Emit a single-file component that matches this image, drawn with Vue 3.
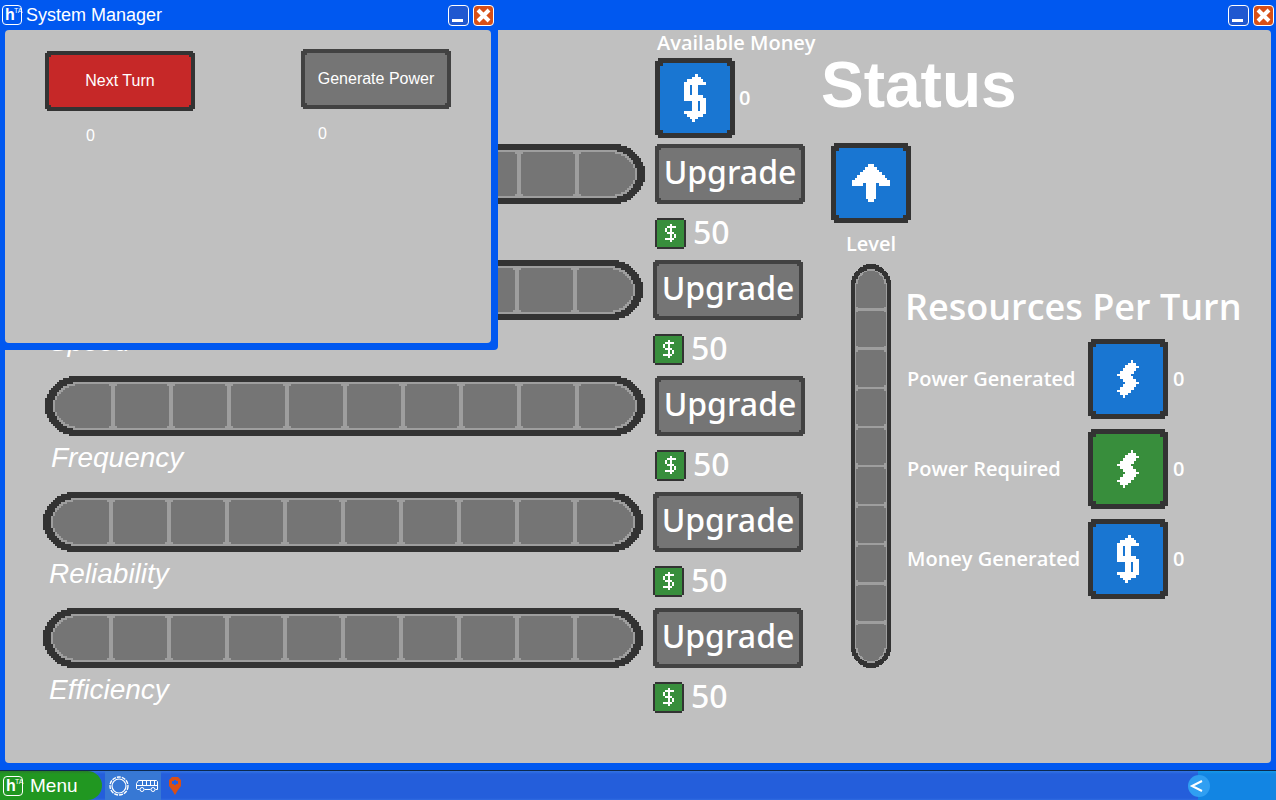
<script setup>
const attributes = [
  { label: '', price: 50, inset: true },
  { label: 'Speed', price: 50, inset: false },
  { label: 'Frequency', price: 50, inset: true },
  { label: 'Reliability', price: 50, inset: false },
  { label: 'Efficiency', price: 50, inset: false }
]

const resources = [
  { label: 'Power Generated', icon: 'bolt', tone: 'blue', value: 0 },
  { label: 'Power Required', icon: 'bolt', tone: 'green', value: 0 },
  { label: 'Money Generated', icon: 'dollar', tone: 'blue', value: 0 }
]

// Sprites are lists of [x, y, width, height] blocks.
const sprites = {
  dollar: [
    [40, 16, 3, 3], [37, 19, 9, 2], [32, 21, 16, 3], [29, 24, 22, 3],
    [29, 27, 6, 10], [37, 27, 6, 10], [29, 37, 19, 3], [29, 40, 22, 3],
    [37, 43, 6, 10], [45, 43, 6, 10], [29, 53, 22, 3], [32, 56, 16, 3],
    [35, 59, 8, 2], [37, 61, 3, 3]
  ],
  bolt: [
    [43, 21, 2, 3], [40, 24, 8, 2], [37, 26, 11, 1], [37, 27, 14, 2], [35, 29, 13, 3],
    [32, 32, 14, 3], [29, 35, 14, 2], [32, 37, 13, 3], [35, 40, 13, 3],
    [37, 43, 14, 2], [35, 45, 13, 3], [32, 48, 14, 3], [29, 51, 14, 2],
    [32, 53, 11, 1], [32, 54, 8, 2], [35, 56, 2, 3]
  ],
  arrow: [
    [37, 21, 6, 3], [34, 24, 12, 3], [32, 27, 16, 2], [29, 29, 22, 3],
    [26, 32, 28, 3], [24, 35, 32, 2], [21, 37, 38, 3], [21, 40, 11, 3],
    [35, 40, 10, 16], [48, 40, 11, 3], [37, 56, 6, 3]
  ],
  cash: [
    [15, 6, 2, 18], [12, 8, 9, 2], [10, 10, 2, 4], [12, 14, 7, 2],
    [19, 16, 2, 4], [10, 20, 9, 2]
  ]
}

const blocks = (name) => sprites[name].map(([x, y, w, h]) => `M${x} ${y}h${w}v${h}h-${w}z`).join('')

// A capsule built of rows two units high, its ends stepped along half an ellipse.
function capsule(x, y, width, height, rx) {
  const r = height / 2
  let d = ''
  for (let row = 0; row < height; row += 2) {
    const dy = (r - row - 1) / r
    const cut = Math.round((rx * (1 - Math.sqrt(1 - dy * dy))) / 2) * 2
    d += `M${x + cut} ${y + row}h${width - cut * 2}v2h-${width - cut * 2}z`
  }
  return d
}

const shell = capsule(0, 0, 600, 60, 32)
const rim = capsule(8, 6, 584, 48, 28)
const core = capsule(10, 8, 580, 44, 28)
const dividers = Array.from({ length: 9 }, (_, i) => {
  const x = 66 + i * 58
  return `M${x} 8h4v44h-4zM${x - 2} 8h8v2h-8zM${x - 2} 50h8v2h-8z`
}).join('')
</script>

<template>
  <div class="desktop">
    <main class="window">
      <header class="titlebar">
        <span class="spacer"></span>
        <button class="control" aria-label="Minimize">
          <svg viewBox="0 0 21 21"><path d="M4 14h11v3H4z" fill="#fff" /></svg>
        </button>
        <button class="control close" aria-label="Close">
          <svg viewBox="0 0 21 21"><path d="M5 5l11 11M16 5L5 16" stroke="#fff" stroke-width="4" /></svg>
        </button>
      </header>

      <div class="pane board">
        <section class="attributes">
          <div class="money">
            <h2 class="caption">Available Money</h2>
            <div class="amount">
              <span class="frame tile blue">
                <svg viewBox="0 0 80 80" shape-rendering="crispEdges"><path :d="blocks('dollar')" fill="#fff" /></svg>
              </span>
              <span class="caption">0</span>
            </div>
          </div>

          <div v-for="(item, i) in attributes" :key="i" class="attribute" :class="{ inset: item.inset }">
            <svg class="meter" viewBox="0 0 600 60" shape-rendering="crispEdges" aria-hidden="true">
              <path :d="shell" fill="#333" />
              <path :d="rim" fill="#9e9e9e" />
              <path :d="core" fill="#757575" />
              <path :d="dividers" fill="#9e9e9e" />
            </svg>
            <button class="frame upgrade">Upgrade</button>
            <h3 class="name">{{ item.label }}</h3>
            <div class="price">
              <span class="frame cash">
                <svg viewBox="0 0 31 31" shape-rendering="crispEdges"><path :d="blocks('cash')" fill="#fff" /></svg>
              </span>
              <span>{{ item.price }}</span>
            </div>
          </div>
        </section>

        <section class="status">
          <h1>Status</h1>
          <div class="columns">
            <div class="level">
              <span class="frame tile blue">
                <svg viewBox="0 0 80 80" shape-rendering="crispEdges"><path :d="blocks('arrow')" fill="#fff" /></svg>
              </span>
              <h2 class="caption">Level</h2>
              <svg class="gauge" viewBox="0 0 60 600" preserveAspectRatio="none" shape-rendering="crispEdges" aria-hidden="true">
                <g transform="matrix(0 1 1 0 0 0)">
                  <path :d="shell" fill="#333" />
                  <path :d="rim" fill="#9e9e9e" />
                  <path :d="core" fill="#757575" />
                  <path :d="dividers" fill="#9e9e9e" />
                </g>
              </svg>
            </div>
            <div class="resources">
              <h2>Resources Per Turn</h2>
              <div v-for="r in resources" :key="r.label" class="resource">
                <span class="caption">{{ r.label }}</span>
                <span class="frame tile" :class="r.tone">
                  <svg viewBox="0 0 80 80" shape-rendering="crispEdges"><path :d="blocks(r.icon)" fill="#fff" /></svg>
                </span>
                <span class="caption">{{ r.value }}</span>
              </div>
            </div>
          </div>
        </section>
      </div>
    </main>

    <section class="window manager" aria-label="System Manager">
      <header class="titlebar">
        <span class="logo"><b>h</b><small>TA</small></span>
        <span class="title">System Manager</span>
        <span class="spacer"></span>
        <button class="control" aria-label="Minimize">
          <svg viewBox="0 0 21 21"><path d="M4 14h11v3H4z" fill="#fff" /></svg>
        </button>
        <button class="control close" aria-label="Close">
          <svg viewBox="0 0 21 21"><path d="M5 5l11 11M16 5L5 16" stroke="#fff" stroke-width="4" /></svg>
        </button>
      </header>
      <div class="pane actions">
        <div class="action">
          <button class="frame red">Next Turn</button>
          <output>0</output>
        </div>
        <div class="action power">
          <button class="frame">Generate Power</button>
          <output>0</output>
        </div>
      </div>
    </section>

    <footer class="taskbar">
      <button class="start"><span class="logo"><b>h</b><small>TA</small></span>Menu</button>
      <button class="task open" aria-label="Ring">
        <svg width="20" height="20" viewBox="0 0 20 20" fill="none" stroke="#fff">
          <circle cx="10" cy="10" r="7" stroke-width="1.2" />
          <circle cx="10" cy="10" r="9" stroke-width="1.4" stroke-dasharray="4 1" />
        </svg>
      </button>
      <button class="task open" aria-label="Bus">
        <svg width="22" height="14" viewBox="0 0 22 14" fill="none" stroke="#fff">
          <path d="M3.500 10.500h-2l-1-1v-5l2-3h18l1 1v8h-2M8.500 10.500h6M.5 6.500h21M6.500 2v4M10.500 2v4M14.500 2v4M18.500 2v4" />
          <circle cx="6" cy="10.500" r="2" /><circle cx="17" cy="10.500" r="2" />
        </svg>
      </button>
      <button class="task" aria-label="Pin">
        <svg width="12" height="18" viewBox="0 0 12 18">
          <path fill="#d84f16" fill-rule="evenodd" d="M3 0h6l3 3v6l-3 4-3 5-3-5-3-4V3zM5 3v1H3v3h2v1h2V7h2V4H7V3z" />
        </svg>
      </button>
      <span class="spacer"></span>
      <div class="tray">
        <button aria-label="Show hidden icons">
          <svg width="22" height="22" viewBox="0 0 22 22" fill="none" stroke="#fff" stroke-width="2"><path d="M14 6L4 11l10 5" /></svg>
        </button>
      </div>
    </footer>
  </div>
</template>

<style>
body {
  margin: 0;
}
</style>

<style scoped>
.desktop {
  position: relative;
  display: flex;
  flex-direction: column;
  min-height: 100vh;
  box-sizing: border-box;
  overflow: hidden;
  color: #fff;
  font-family: "Liberation Sans", Arial, sans-serif;
  font-size: 16px;
}
.desktop * {
  box-sizing: border-box;
}
h1, h2, h3 {
  margin: 0;
  font-weight: 400;
}
button {
  padding: 0;
  border: 0;
  background: none;
  color: inherit;
  font: inherit;
}
svg {
  display: block;
}
.spacer {
  flex: 1;
}
.window {
  display: flex;
  flex: 1;
  flex-direction: column;
  padding: 0 5px 7px;
  background: #0058f0;
}
.titlebar {
  display: flex;
  align-items: center;
  gap: 4px;
  height: 30px;
  margin: 0 -3px;
}
.title {
  font-size: 18px;
}
.control {
  width: 21px;
  height: 21px;
  border: 1px solid #fff;
  border-radius: 4px;
  background: #2058d0;
}
.control svg {
  width: 21px;
  height: 21px;
  margin: -1px;
}
.close {
  background: #d84f16;
}
.logo {
  display: flex;
  width: 20px;
  height: 20px;
  padding-left: 2px;
  border: 1px solid #fff;
  border-radius: 4px;
  line-height: 18px;
}
.logo b {
  width: 8px;
  font-size: 16px;
}
.logo small {
  padding-left: 1px;
  font-size: 7px;
  font-weight: 400;
  line-height: 10px;
}
.pane {
  flex: 1;
  border-radius: 4px;
  background: #c0c0c0;
}
.manager {
  position: absolute;
  top: 0;
  left: 0;
  width: 498px;
  min-height: 350px;
  padding-right: 7px;
  border-radius: 0 0 4px 0;
}
.actions {
  display: flex;
  justify-content: space-between;
  padding: 21px 40px;
}
.action {
  display: flex;
  flex-direction: column;
  gap: 16px;
}
.action output {
  padding-left: 41px;
  line-height: 18px;
}
.power {
  margin-top: -2px;
}
.power output {
  padding-left: 17px;
}

.frame {
  --edge: #424242;
  --fill: #757575;
  --cut: 2px;
  display: block;
  width: 150px;
  height: 60px;
  border: 4px solid var(--edge);
  background:
    linear-gradient(var(--edge), var(--edge)) 0 0 / var(--cut) var(--cut) no-repeat,
    linear-gradient(var(--edge), var(--edge)) 100% 0 / var(--cut) var(--cut) no-repeat,
    linear-gradient(var(--edge), var(--edge)) 0 100% / var(--cut) var(--cut) no-repeat,
    linear-gradient(var(--edge), var(--edge)) 100% 100% / var(--cut) var(--cut) no-repeat,
    var(--fill);
  clip-path: polygon(
    var(--cut) 0, calc(100% - var(--cut)) 0, calc(100% - var(--cut)) var(--cut), 100% var(--cut),
    100% calc(100% - var(--cut)), calc(100% - var(--cut)) calc(100% - var(--cut)),
    calc(100% - var(--cut)) 100%, var(--cut) 100%, var(--cut) calc(100% - var(--cut)),
    0 calc(100% - var(--cut)), 0 var(--cut), var(--cut) var(--cut)
  );
}
.red {
  --edge: #333;
  --fill: #c62828;
}
.tile {
  --edge: #333;
  --cut: 3px;
  flex: none;
  width: 80px;
  height: 80px;
  border-width: 5px;
}
.tile svg {
  width: 80px;
  height: 80px;
  margin: -5px;
}
.blue {
  --fill: #1976d2;
}
.green {
  --fill: #388e3c;
}
.cash {
  --edge: #333;
  --fill: #388e3c;
  width: 31px;
  height: 31px;
  border-width: 2px;
  background: var(--fill);
}
.cash svg {
  width: 31px;
  height: 31px;
  margin: -2px;
}
.upgrade,
.price {
  font-family: "Noto Sans", sans-serif;
  font-size: 32px;
  font-weight: 500;
}
.upgrade {
  line-height: 44px;
  padding-bottom: 4px;
}
.caption {
  font-family: "Open Sans", "Noto Sans", sans-serif;
  font-size: 20px;
  font-weight: 600;
  line-height: 26px;
  white-space: nowrap;
}

.board {
  display: flex;
  gap: 26px;
}
.attributes {
  flex: none;
  padding-left: 38px;
}
.money {
  width: 148px;
  height: 114px;
  margin-left: 612px;
}
.money h2 {
  padding-left: 2px;
}
.amount {
  display: flex;
  align-items: center;
  gap: 4px;
  margin-top: 2px;
}
.attribute {
  display: grid;
  grid-template-columns: 600px 150px;
  grid-template-rows: 60px 56px;
  column-gap: 10px;
}
.inset {
  margin-left: 2px;
  margin-right: -2px;
}
.meter {
  width: 600px;
  height: 60px;
}
.name {
  padding: 6px;
  font-size: 28px;
  font-style: italic;
  line-height: 32px;
}
.price {
  display: flex;
  gap: 7px;
  padding-top: 14px;
  line-height: 28px;
}

.status {
  flex: 1;
  padding-top: 18px;
}
h1 {
  margin-left: -8px;
  font-size: 64px;
  font-weight: 700;
  line-height: 74px;
}
.columns {
  display: flex;
  margin: 21px 0 0 2px;
}
.level {
  display: flex;
  flex: none;
  flex-direction: column;
  align-items: center;
  width: 80px;
}
.level .caption {
  margin: 8px 0 7px;
}
.gauge {
  width: 40px;
  height: 404px;
}
.resources {
  margin: 139px 0 0 -5px;
}
.resources h2 {
  margin-left: -1px;
  font-family: "Open Sans", "Noto Sans", sans-serif;
  font-size: 36px;
  font-weight: 600;
  line-height: 50px;
  white-space: nowrap;
}
.resource {
  display: grid;
  grid-template-columns: 176px 80px auto;
  column-gap: 5px;
  align-items: center;
  margin: 7px 0 10px 1px;
}
.resource + .resource {
  margin-top: 0;
}

.taskbar {
  display: flex;
  height: 30px;
  border-top: 1px solid #0c2a50;
  background: linear-gradient(#3474e4, #245edb 3px, #245edb 27px, #2f6ae0);
}
.start {
  display: flex;
  align-items: center;
  gap: 7px;
  width: 102px;
  margin-right: 3px;
  padding-left: 3px;
  border-radius: 0 16px 16px 0;
  background: linear-gradient(#2a7d2a, #219721 3px);
  font-size: 19px;
}
.task {
  display: grid;
  place-items: center;
  width: 28px;
}
.open {
  background: #3778d4;
}
.tray {
  width: 78px;
  background: linear-gradient(#159ae8, #1285e3 3px);
}
.tray button {
  width: 22px;
  height: 22px;
  margin: 4px 0 0 -10px;
  border-radius: 50%;
  background: #309ff2;
}
</style>
